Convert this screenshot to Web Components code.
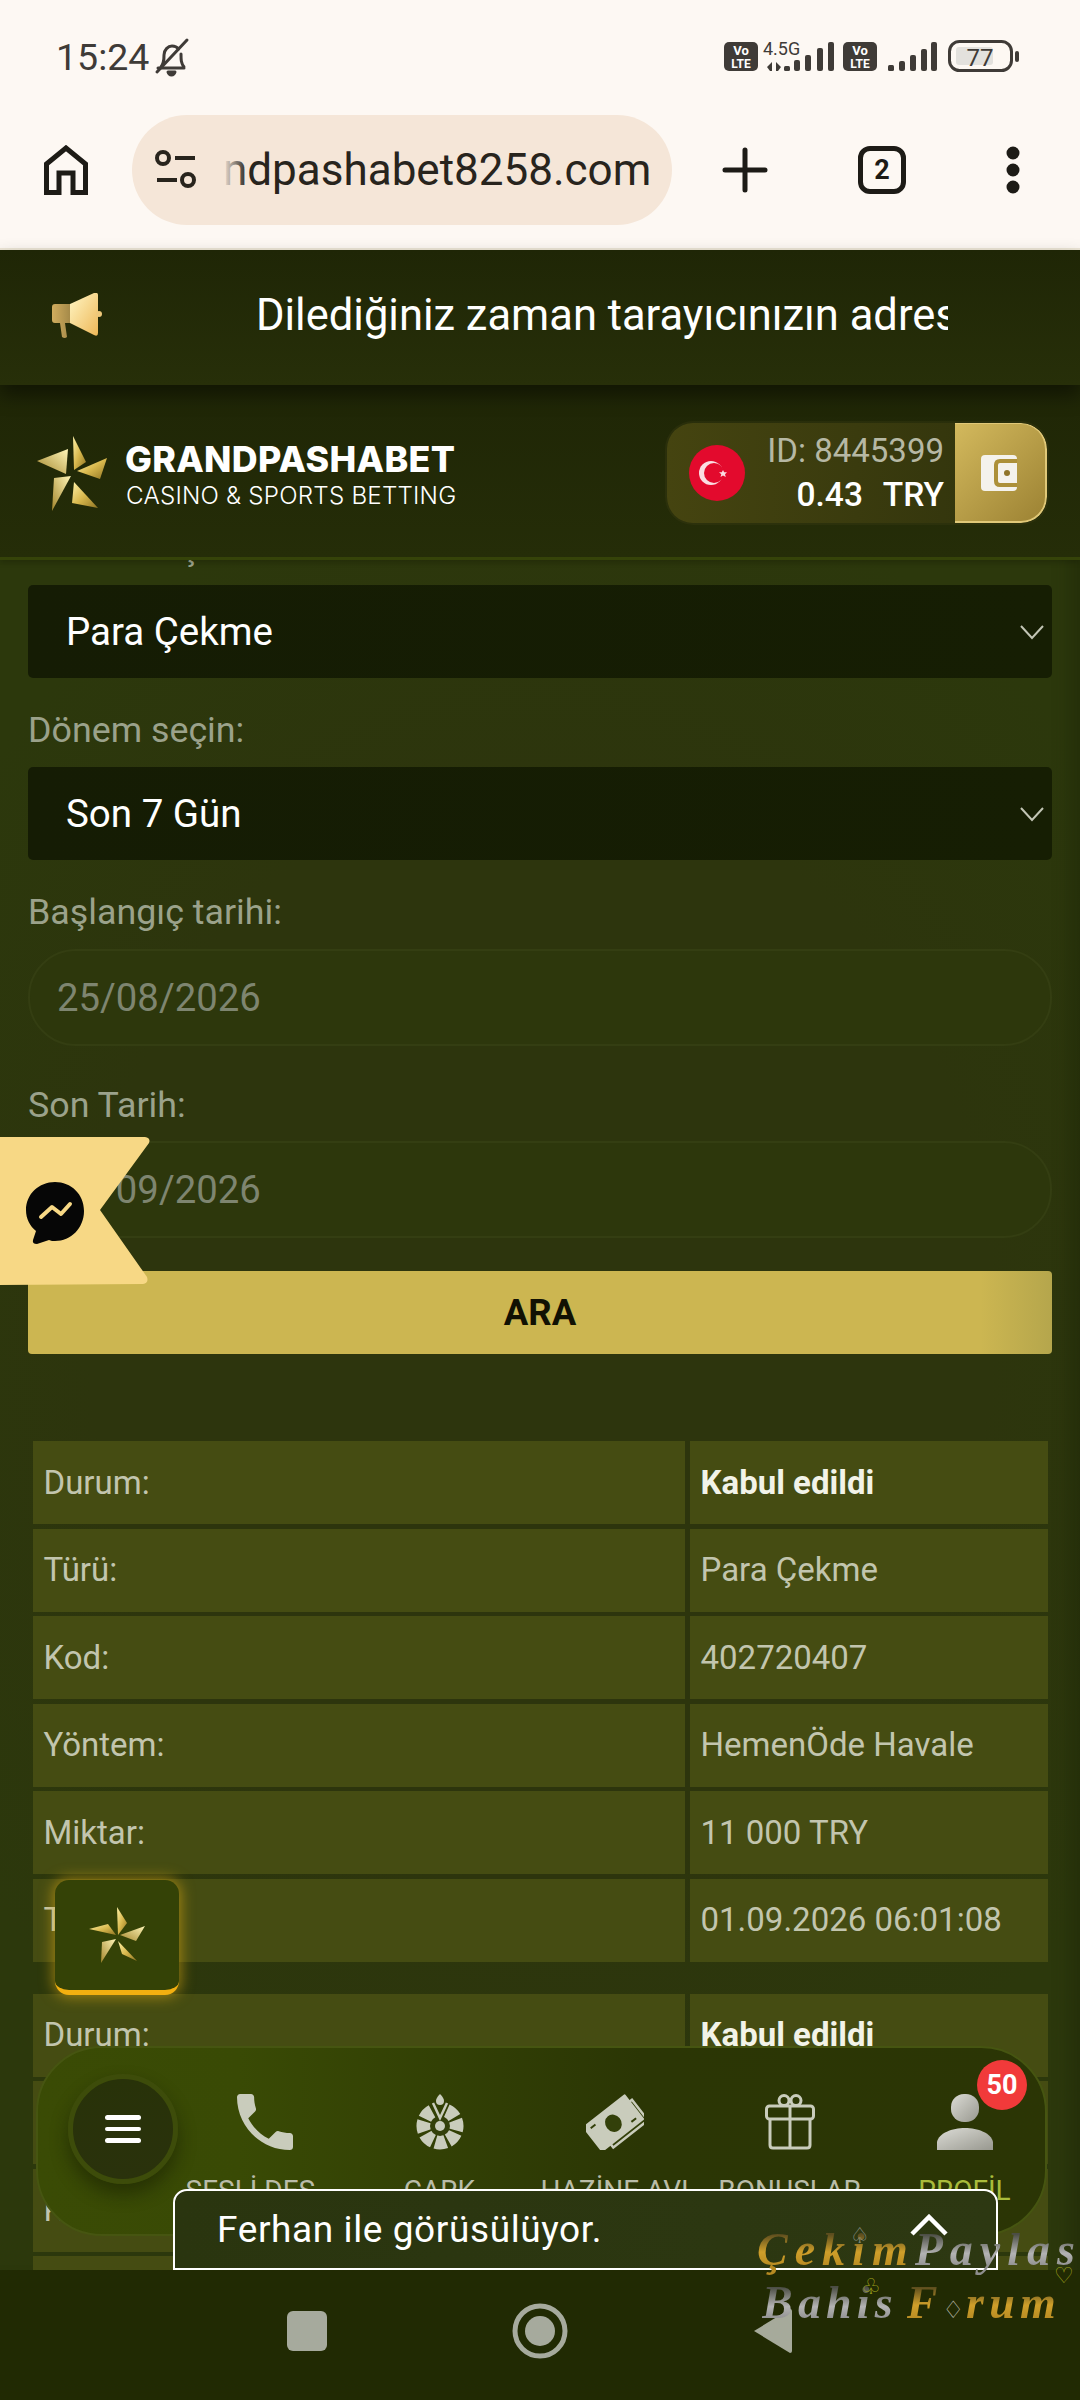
<!DOCTYPE html>
<html lang="tr"><head><meta charset="utf-8"><title>Grandpashabet</title>
<style>
html,body{margin:0;padding:0;background:#212a03;font-family:Roboto,"Noto Sans",sans-serif}
</style></head><body>
<x-phone>
  <x-status-bar slot="top"></x-status-bar>
  <x-browser-bar slot="top"></x-browser-bar>
  <x-notice slot="top">Dilediğiniz zaman tarayıcınızın adresine</x-notice>
  <x-site-header slot="top"></x-site-header>

  <x-page>
    <x-field label="Durum seçin:" first><x-select>Para Çekme</x-select></x-field>
    <x-field label="Dönem seçin:"><x-select>Son 7 Gün</x-select></x-field>
    <x-field label="Başlangıç tarihi:"><x-date>25/08/2026</x-date></x-field>
    <x-field label="Son Tarih:" wide><x-date>01/09/2026</x-date></x-field>
    <x-search-button>ARA</x-search-button>
    <x-record>
      <x-row label="Durum:" strong>Kabul edildi</x-row>
      <x-row label="Türü:">Para Çekme</x-row>
      <x-row label="Kod:">402720407</x-row>
      <x-row label="Yöntem:">HemenÖde Havale</x-row>
      <x-row label="Miktar:">11 000 TRY</x-row>
      <x-row label="Tarih:">01.09.2026 06:01:08</x-row>
    </x-record>
    <x-record>
      <x-row label="Durum:" strong>Kabul edildi</x-row>
      <x-row></x-row>
      <x-row label="Kod:"></x-row>
      <x-row></x-row>
    </x-record>
  </x-page>

  <x-messenger-tab slot="over"></x-messenger-tab>
  <x-star-button slot="over"></x-star-button>
  <x-bottom-nav slot="over"></x-bottom-nav>
  <x-call-banner slot="over">Ferhan ile görüsülüyor.</x-call-banner>
  <x-system-nav slot="bottom"></x-system-nav>
  <x-watermark slot="over"></x-watermark>
</x-phone>

<script>
function def(name, css, html){
  class C extends HTMLElement{
    constructor(){super();const r=this.attachShadow({mode:'open'});
      r.innerHTML='<style>'+css+'</style>'+(typeof html==='function'?html(this):html);}
  }
  customElements.define(name,C);
}
const goldDefs=(id)=>`<defs><linearGradient id="${id}" x1="0" y1="0" x2="1" y2="1"><stop offset="0" stop-color="#fff2a8"/><stop offset=".5" stop-color="#d9b94e"/><stop offset="1" stop-color="#8f7422"/></linearGradient><linearGradient id="${id}b" x1="1" y1="0" x2="0" y2="1"><stop offset="0" stop-color="#fff6b8"/><stop offset="1" stop-color="#a3862c"/></linearGradient></defs>`;

def('x-phone',`:host{display:flex;flex-direction:column;width:1080px;height:2400px;position:relative;overflow:hidden;font-family:Roboto,"Noto Sans",sans-serif}
.main{flex:1;min-height:0;display:flex}`,
`<slot name="top"></slot><div class="main"><slot></slot></div><slot name="bottom"></slot><slot name="over"></slot>`);

def('x-status-bar',`:host{display:flex;align-items:center;justify-content:space-between;height:100px;background:#fdf8f3;color:#3f3b37;padding:0 60px 0 56px;box-sizing:border-box}
.l{display:flex;align-items:center;gap:3px;font:400 37.500px/1 Roboto,sans-serif;padding-top:16px}
svg{display:block}.r{padding-top:16px}`,
`<div class="l"><span>15:24</span><svg width="40" height="42" viewBox="0 0 40 42" fill="none" stroke="#3f3b37" stroke-width="3" stroke-linecap="round" stroke-linejoin="round"><path d="M6 31h26M9 30c3-4 3-7 3-12 0-5 4-9 8-9 3 0 5 1 6.500 3M29 17c0 6 0 9 3 13"/><path d="M5 35 35 3"/><path d="M16 35c1 4 6 4 7 0z" fill="#3f3b37"/></svg></div>
<div class="r"><svg width="296" height="40" viewBox="0 0 296 40">
<rect x="0" y="4" width="34" height="29" rx="5" fill="#3f3b37"/><text x="17" y="17" font-family="Roboto" font-weight="700" font-size="13" text-anchor="middle" fill="#fff">Vo</text><text x="17" y="29.500" font-family="Roboto" font-weight="700" font-size="12" text-anchor="middle" fill="#fff">LTE</text>
<text x="39" y="17" font-family="Roboto" font-size="18" fill="#3f3b37">4.5G</text>
<path d="M48 24v9h-2l-3-4zM52 24v9h2l3-4z" fill="#3f3b37"/>
<g fill="#3f3b37"><rect x="60" y="28" width="6" height="5" rx="1.500"/><rect x="70" y="22" width="6" height="11" rx="2"/><rect x="81" y="17" width="6" height="16" rx="2"/><rect x="93" y="10" width="6" height="23" rx="2"/><rect x="104" y="4" width="6" height="29" rx="2"/></g>
<rect x="119" y="4" width="34" height="29" rx="5" fill="#3f3b37"/><text x="136" y="17" font-family="Roboto" font-weight="700" font-size="13" text-anchor="middle" fill="#fff">Vo</text><text x="136" y="29.500" font-family="Roboto" font-weight="700" font-size="12" text-anchor="middle" fill="#fff">LTE</text>
<g fill="#3f3b37"><rect x="164" y="27" width="6" height="6" rx="1.500"/><rect x="175" y="23" width="6" height="10" rx="2"/><rect x="186" y="17" width="6" height="16" rx="2"/><rect x="197" y="11" width="6" height="22" rx="2"/><rect x="207" y="4" width="6" height="29" rx="2"/></g>
<rect x="225.500" y="3.500" width="62" height="29" rx="10" fill="none" stroke="#3f3b37" stroke-width="3"/><rect x="232" y="9" width="37" height="18" rx="3" fill="#e3e1dd"/><text x="256" y="28" font-family="Roboto" font-size="24" text-anchor="middle" fill="#3f3b37">77</text><rect x="291" y="13" width="4" height="11" rx="2" fill="#3f3b37"/>
</svg></div>`);

def('x-browser-bar',`:host{display:flex;align-items:center;height:150px;box-sizing:border-box;background:#fdf8f3;border-bottom:2px solid #ede6d6;padding:0 0 8px 44px;color:#1d1b16}
svg{display:block;flex:none}
.pill{width:540px;height:110px;margin-left:44px;border-radius:55px;background:#f5e6d8;display:flex;align-items:center;padding-left:23px;box-sizing:border-box}
.url{position:relative;margin-left:26px;width:430px;overflow:hidden;white-space:nowrap;font:400 44px/54px Roboto,sans-serif;color:#28241d}
.url:before{content:"";position:absolute;left:0;top:0;bottom:0;width:24px;background:linear-gradient(90deg,#f5e6d8,rgba(245,230,216,0))}
.plus{margin-left:50px}
.tabbox{margin-left:90px;width:48px;height:48px;border:5px solid #1d1b16;border-radius:12px;box-sizing:border-box;display:flex;align-items:center;justify-content:center;font:700 27px/1 Roboto,sans-serif}
.dots{margin-left:100px}`,
`<svg width="44" height="50" viewBox="0 0 44 50" fill="none" stroke="#1d1b16" stroke-width="5"><path d="M2.500 47.500V19L22 3l19.500 16v28.500H29V28H15v19.500z" stroke-linejoin="miter"/></svg>
<div class="pill"><svg width="42" height="42" viewBox="0 0 42 42" fill="none" stroke="#28241d" stroke-width="4"><circle cx="8" cy="9" r="6"/><path d="M20 9h20M2 31h20"/><circle cx="33" cy="31" r="6"/></svg><div class="url">ndpashabet8258.com</div></div>
<svg class="plus" width="46" height="46" viewBox="0 0 46 46" stroke="#1d1b16" stroke-width="5" stroke-linecap="round"><path d="M23 3v40M3 23h40"/></svg>
<div class="tabbox">2</div>
<svg class="dots" width="14" height="48" viewBox="0 0 14 48" fill="#1d1b16"><circle cx="7" cy="7" r="6.500"/><circle cx="7" cy="24" r="6.500"/><circle cx="7" cy="41" r="6.500"/></svg>`);

def('x-notice',`:host{display:flex;align-items:center;height:135px;box-sizing:border-box;background:linear-gradient(#1f2606,#272f09);padding:0 0 4px 52px;position:relative;z-index:2;box-shadow:0 10px 18px rgba(0,0,0,.45)}
svg{display:block;flex:none}.t{margin-left:154px;width:692px;overflow:hidden;white-space:nowrap;color:#fff;font:400 43.500px/56px Roboto,sans-serif}`,
`<svg width="50" height="46" viewBox="0 0 50 46"><defs><linearGradient id="m" x1="0" y1="0" x2="1" y2="1"><stop offset="0" stop-color="#fff6c4"/><stop offset="1" stop-color="#eeb858"/></linearGradient><linearGradient id="n" x1="0" y1="0" x2="1" y2="0"><stop offset="0" stop-color="#d1ad5e"/><stop offset="1" stop-color="#a58a49"/></linearGradient></defs><path d="M3 11h15v19H13l2 14q-2 2-5 0L8 30H3q-3 0-3-3V14q0-3 3-3z" fill="url(#n)"/><path d="M18 11 42 0q4-1 4 2v38q0 4-4 2L18 30z" fill="url(#m)"/><circle cx="47" cy="21" r="3" fill="#eec87a"/></svg><div class="t"><slot></slot></div>`);

def('x-site-header',`:host{display:flex;align-items:center;height:175px;box-sizing:border-box;background:linear-gradient(#1f2606,#252d08);border-bottom:3px solid #354309;padding:4px 33px 0 36px;position:relative;z-index:1;box-shadow:0 2px 6px rgba(0,0,0,.2)}
svg{display:block;flex:none}
.brand{margin-left:17px;color:#fff;flex:1;padding-top:3px}
.a{font:800 35.800px/42px Inter,"Open Sans",sans-serif;letter-spacing:.3px;white-space:nowrap}
.b{font:300 24.200px/32px Inter,"Open Sans",sans-serif;white-space:nowrap;margin-left:1px;letter-spacing:.2px}
.w{display:flex;align-items:stretch;width:380px;height:100px;border-radius:26px;overflow:hidden;background:linear-gradient(90deg,#454410,#2f320c);box-shadow:0 0 0 2px rgba(60,60,20,.35)}
.flag{margin:auto 0 auto 22px}
.id{flex:1;display:flex;flex-direction:column;justify-content:center;align-items:flex-end;padding-right:11px;font:400 33px/44px Roboto,sans-serif;color:#b6b8a4}
.bal{color:#fff;font-weight:500;font-size:33.500px;white-space:pre;word-spacing:2px}
.gold{width:92px;flex:none;border-radius:0 26px 26px 0;background:linear-gradient(135deg,#d3b95d,#9c8233);display:flex;align-items:center;justify-content:center;box-sizing:border-box;border:solid #e0c878;border-width:1px 2px 2px 0}`,
`<svg width="72" height="76" viewBox="37 435 72 76">${goldDefs('hs')}
<polygon points="74,436 87,462 75,470" fill="url(#hs)"/><polygon points="38,461 69,449 67,474" fill="url(#hsb)"/><polygon points="108,458 78,471 101,479" fill="url(#hs)"/><polygon points="53,511 55,478 72,476" fill="url(#hsb)"/><polygon points="75,482 99,508 73,503" fill="url(#hs)"/></svg>
<div class="brand"><div class="a">GRANDPASHABET</div><div class="b">CASINO &amp; SPORTS BETTING</div></div>
<div class="w"><svg class="flag" width="56" height="56" viewBox="0 0 56 56"><circle cx="28" cy="28" r="28" fill="#e30a2d"/><circle cx="22" cy="28" r="12" fill="#fbdde2"/><circle cx="25" cy="28" r="10" fill="#e30a2d"/><polygon points="34,25 35.200,27.300 38,27.300 36,29.300 36.800,32 34,30.500 31.500,32 32.300,29.300 30,27.300 32.800,27.300" fill="#fbdde2"/></svg>
<div class="id"><div>ID: 8445399</div><div class="bal">0.43  TRY</div></div>
<div class="gold"><svg width="38" height="36" viewBox="0 0 38 36"><rect width="36" height="36" rx="4" fill="#f4f2ec"/><path d="M36 6H19q-4 0-4 4v16q0 4 4 4h17" fill="none" stroke="#ac9039" stroke-width="4"/><circle cx="26" cy="18" r="3" fill="#8f7429"/></svg></div></div>`);

def('x-page',`:host{display:block;flex:1;min-width:0;overflow:hidden;box-sizing:border-box;padding:0 28px;background:radial-gradient(900px 1100px at 50% 45%,#2d350d 50%,#2c380c 80%),#2d3a0c;box-shadow:inset -24px 0 16px -14px rgba(30,40,8,.5)}`,`<slot></slot>`);

def('x-field',`:host{display:block}
label{display:block;font:400 35.800px/40px Roboto,sans-serif;color:#9ba28b;margin:32px 0 17px;white-space:nowrap}
:host([first]) label{margin-top:-32px}:host([wide]) label{margin-top:39px;margin-bottom:16px}`,
h=>`<label>${h.getAttribute('label')}</label><slot></slot>`);

def('x-select',`:host{display:flex;align-items:center;justify-content:space-between;height:93px;box-sizing:border-box;background:linear-gradient(90deg,#151c04,#161e03);border-radius:5px;padding:0 8px 0 38px;color:#fff;font:400 38.500px/44px Roboto,sans-serif}
svg{display:block}`,`<span><slot></slot></span><svg width="24" height="16" viewBox="0 0 24 16" fill="none" stroke="#c2c5b5" stroke-width="2"><path d="M1 2l11 12L23 2"/></svg>`);

def('x-date',`:host{display:flex;align-items:center;height:97px;box-sizing:border-box;border:2px solid #343e12;border-radius:48px;padding:0 27px;color:#7e8570;font:400 38.300px/44px Roboto,sans-serif;background:#2d370c}`,`<slot></slot>`);

def('x-search-button',`:host{display:flex;align-items:center;justify-content:center;height:83px;margin-top:33px;border-radius:4px;background:linear-gradient(90deg,#ccb651 0,#ccb651 93%,#b5a64c 100%);color:#111103;font:700 36.500px/44px Roboto,sans-serif}`,`<slot></slot>`);

def('x-record',`:host{display:grid;row-gap:4.500px;margin:32px 4px 0 5px}:host(:first-of-type){margin-top:87px}`,`<slot></slot>`);
def('x-row',`:host{display:grid;grid-template-columns:652px 358px;column-gap:5px;height:83px;color:#c2c5ae;font:400 33px/40px Roboto,sans-serif}
div{background:#454c12;display:flex;align-items:center;padding:0 11px 0 10.500px;white-space:nowrap;overflow:hidden}
:host([strong]) .v{color:#f2f3e8;font-weight:700}`,
h=>`<div>${h.getAttribute('label')||''}</div><div class="v"><slot></slot></div>`);

def('x-messenger-tab',`:host{position:absolute;left:0;top:1137px;width:150px;height:148px;display:block;z-index:4}svg{display:block}`,
`<svg width="150" height="148" viewBox="0 0 150 148"><path d="M0 0H145q6 1 4 6L100 73l47 67q2 6-4 7L0 148z" fill="#f7d885"/><path d="M55 45c-16 0-29 12-29 28 0 9 4 16 10 21l-3 9q-1 4 4 4l12-4c2 1 4 1 6 1 16 0 29-13 29-30S71 45 55 45z" fill="#060606"/><path d="M41 80l11-10 9 7 9-10" fill="none" stroke="#f7d885" stroke-width="4" stroke-linecap="round" stroke-linejoin="round"/></svg>`);

def('x-star-button',`:host{position:absolute;left:55px;top:1880px;width:124px;height:115px;box-sizing:border-box;border-radius:14px;background:#344206;border-bottom:5px solid #f3b010;box-shadow:0 0 14px 2px rgba(233,176,20,.55);display:flex;align-items:center;justify-content:center;z-index:4}svg{display:block}`,
`<svg width="56" height="56" viewBox="0 0 56 56">${goldDefs('bs')}<polygon points="28,0 38,16 29,28" fill="url(#bs)"/><polygon points="56,19 31,28 47,34" fill="url(#bsb)"/><polygon points="48,54 29,34 33,47" fill="url(#bs)"/><polygon points="12,56 27,32 13,35" fill="url(#bsb)"/><polygon points="0,22 19,17 27,28" fill="url(#bs)"/></svg>`);

def('x-nav-item',`:host{flex:0 0 175px;width:175px;display:flex;flex-direction:column;align-items:center;position:relative;padding-top:46px;box-sizing:border-box;color:#b9bca8;font:400 28px/32px Roboto,sans-serif}
.ic{height:56px;display:flex;align-items:flex-end}
.lb{margin-top:25px;max-width:158px;overflow:hidden;text-overflow:ellipsis;white-space:nowrap}
:host([active]) .lb{color:#a9bb3b}
::slotted(svg){display:block}`,
h=>`<div class="ic"><slot></slot></div><div class="lb">${h.getAttribute('label')}</div>`);

def('x-bottom-nav',`:host{position:absolute;left:36px;top:2046px;width:1011px;height:190px;box-sizing:border-box;border:2px solid #465511;border-radius:66px;background:linear-gradient(90deg,#3a4b05 0,#394a05 20%,#2b3605 60%,#2b3505 100%);display:flex;z-index:5}
.menu{flex:none;width:110px;height:110px;margin:26px 0 0 30px;box-sizing:border-box;border-radius:50%;background:linear-gradient(#283209,#2a320c);border:5px solid #3d4c0a;box-shadow:0 10px 18px rgba(15,20,0,.45);display:flex;flex-direction:column;align-items:center;justify-content:center;gap:7px}
.menu i{display:block;width:36px;height:4.500px;border-radius:3px;background:#fff}
.badge{position:absolute;left:939px;top:12px;width:50px;height:50px;border-radius:50%;background:#f13a3a;color:#fff;font:700 27px/50px Roboto,sans-serif;text-align:center}
.items{display:flex;margin-left:-1px}`,
`<div class="menu"><i></i><i></i><i></i></div><div class="items"><slot></slot></div><div class="badge">50</div>`);

def('x-call-banner',`:host{position:absolute;left:173px;top:2189px;width:825px;height:81px;box-sizing:border-box;border:2px solid #fff;border-radius:14px 14px 0 0;background:linear-gradient(90deg,#2a350f,#2d3812);display:flex;align-items:center;justify-content:space-between;padding:0 48px 0 42px;color:#fff;font:400 37px/44px Roboto,sans-serif;letter-spacing:.6px;z-index:6}svg{display:block;margin-bottom:10px}`,
`<span><slot></slot></span><svg width="38" height="22" viewBox="0 0 38 22" fill="none" stroke="#fff" stroke-width="4.500"><path d="M2 20 19 3l17 17"/></svg>`);

def('x-system-nav',`:host{display:flex;align-items:center;height:130px;flex:none;background:#212a03;padding:0 0 8px 287px;box-sizing:border-box;position:relative;z-index:5}svg{display:block;flex:none}`,
`<svg width="40" height="40" viewBox="0 0 40 40"><rect width="40" height="40" rx="6" fill="#a6aa9d"/></svg>
<svg style="margin-left:185px" width="56" height="56" viewBox="0 0 56 56"><circle cx="28" cy="28" r="25" fill="none" stroke="#a6aa9d" stroke-width="5"/><circle cx="28" cy="28" r="15" fill="#a6aa9d"/></svg>
<svg style="margin-left:186px" width="38" height="44" viewBox="0 0 38 44"><path d="M0 22 36 0q2 0 2 2v40q0 2-2 2z" fill="#a6aa9b"/></svg>`);

def('x-watermark',`:host{position:absolute;left:750px;top:2222px;width:330px;height:110px;z-index:7;display:block;pointer-events:none;font-family:"Liberation Serif",serif}
.l{position:absolute;white-space:nowrap;font-style:italic;font-weight:700;font-size:46px;line-height:50px;letter-spacing:7px}
.l span{-webkit-background-clip:text;background-clip:text;color:transparent}
.gold{background-image:linear-gradient(#5c4d1e 20%,#cf9f2a 55%,#b68a22 85%)}
.gray{background-image:linear-gradient(#4b4d44 20%,#b3b3b3 58%,#8e8e8e 85%)}
.two{letter-spacing:5.200px;word-spacing:-8px}
.s{position:absolute;font:400 22px/1 "DejaVu Sans",sans-serif}`,
`<div class="l" style="left:7px;top:3px"><span class="gold">Çekim</span><span class="gray">Paylas</span></div>
<div class="l two" style="left:12px;top:56px"><span class="gray">Bahis </span><span class="gold">F</span><span style="font:400 24px/1 'DejaVu Sans',sans-serif;color:#b5b5a5;-webkit-text-fill-color:#b5b5a5;letter-spacing:2px">♢</span><span class="gold">rum</span></div>
<span class="s" style="left:100px;top:3px;color:#8d9688">♤</span>
<span class="s" style="left:111px;top:54px;color:#a3a51c">♧</span>
<span class="s" style="left:304px;top:43px;color:#a3a51c">♡</span>`);

const nav=document.querySelector('x-bottom-nav');
const grey='#c9ccbc';
nav.innerHTML=`
<x-nav-item label="SESLİ DESTEK"><svg width="56" height="56" viewBox="3 3 18 18" fill="${grey}"><path d="M6.620 10.790c1.440 2.830 3.760 5.140 6.590 6.590l2.200-2.200c.270-.270.670-.360 1.020-.240 1.120.370 2.330.570 3.570.570.550 0 1 .450 1 1V20c0 .550-.450 1-1 1-9.390 0-17-7.610-17-17 0-.550.450-1 1-1h3.500c.550 0 1 .450 1 1 0 1.250.200 2.450.570 3.570.110.350.030.740-.250 1.020l-2.200 2.200z"/></svg></x-nav-item>
<x-nav-item label="ÇARK"><svg width="50" height="56" viewBox="0 0 50 56"><circle cx="25" cy="32" r="15" fill="none" stroke="${grey}" stroke-width="17" stroke-dasharray="9.300 2.480 9.300 2.480 9.300 2.480 9.300 2.480 9.300 2.480 9.300 2.480 9.300 14.260" transform="rotate(-66 25 32)"/><circle cx="25" cy="32" r="10" fill="#33400a"/><circle cx="25" cy="32" r="5" fill="${grey}"/><path d="M25 0c3 3 4 5 4 7a4 4 0 0 1-8 0c0-2 1-4 4-7z" fill="${grey}"/><path d="M18 9l7 15 7-15" fill="none" stroke="${grey}" stroke-width="2.500"/></svg></x-nav-item>
<x-nav-item label="HAZİNE AVI"><svg width="58" height="56" viewBox="0 0 58 56"><g transform="rotate(-38 29 28)"><rect x="12" y="21" width="44" height="26" fill="#33400a" stroke="${grey}" stroke-width="2.500"/><rect x="0" y="12" width="54" height="32" rx="1" fill="${grey}"/><ellipse cx="27" cy="28" rx="8" ry="9" fill="#33400a"/><path d="M6 18h6M42 38h6" stroke="#33400a" stroke-width="2"/></g></svg></x-nav-item>
<x-nav-item label="BONUSLAR"><svg width="50" height="56" viewBox="0 0 50 56" fill="none" stroke="${grey}" stroke-width="3"><circle cx="19" cy="6.500" r="5"/><circle cx="31" cy="6.500" r="5"/><rect x="1.500" y="12" width="47" height="13" rx="3"/><path d="M5 25v26q0 3 3 3h34q3 0 3-3V25M25 12v42"/></svg></x-nav-item>
<x-nav-item label="PROFİL" active><svg width="56" height="56" viewBox="0 0 56 56"><defs><linearGradient id="p" x1="0" y1="0" x2="1" y2="1"><stop offset="0" stop-color="#dcdcd6"/><stop offset="1" stop-color="#98988f"/></linearGradient></defs><rect x="14" y="0" width="28" height="28" rx="13" fill="url(#p)"/><path d="M0 56V48c2-9 15-14 28-14s26 5 28 14v8z" fill="url(#p)"/></svg></x-nav-item>`;
</script>
</body></html>
